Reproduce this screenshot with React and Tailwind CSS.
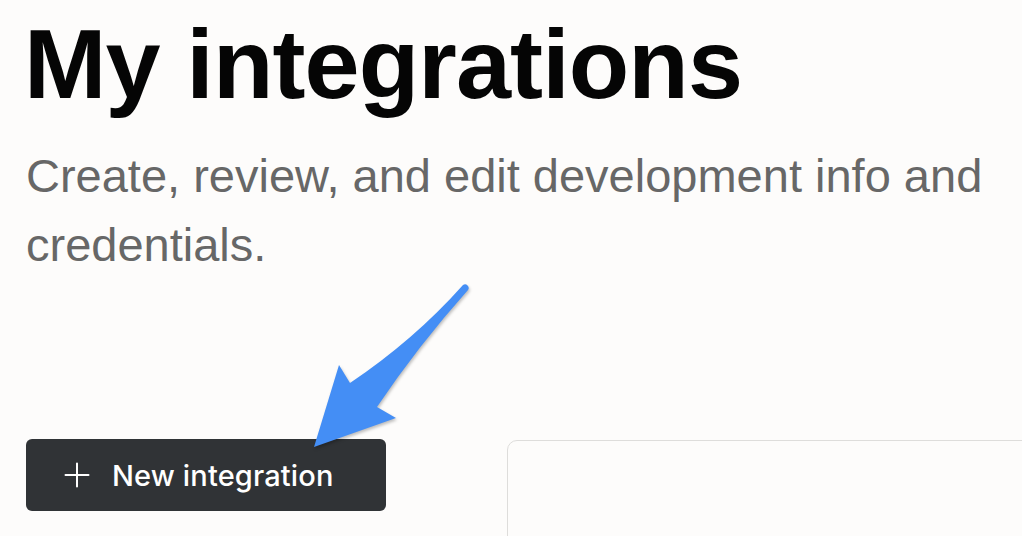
export default function App() {
  return (
    <div className="relative w-[1022px] h-[536px] overflow-hidden bg-[#fdfcfb]">
      <div className="flex flex-col pl-[26px] pt-[14px]">
        <h1 className="text-[99px] leading-none font-bold tracking-[-0.9px] text-[#050505] [font-family:'Liberation_Sans',Arial,sans-serif] ml-[-2px]">
          My integrations
        </h1>
        <p className="mt-[28px] text-[47px] leading-[69px] text-[#676767] [font-family:'Liberation_Sans',Arial,sans-serif] max-w-[970px]">
          Create, review, and edit development info and credentials.
        </p>
        <div className="mt-[160px] flex items-start">
          <button className="flex items-center h-[72px] w-[360px] shrink-0 rounded-[6px] bg-[#303336] pl-[38px] gap-[22px] text-white">
            <svg width="26" height="26" viewBox="0 0 26 26" fill="none" stroke="white" strokeWidth="2" strokeLinecap="round">
              <path d="M13 1.5V24.5M1.5 13H24.5" />
            </svg>
            <span className="text-[29px] font-medium [font-family:Inter,sans-serif] tracking-[0.15px] pt-[2px]">New integration</span>
          </button>
          <div className="ml-[121px] mt-[1px] h-[200px] w-[700px] shrink-0 rounded-[10px] border border-[#dedddb]" />
        </div>
      </div>
      <svg
        className="absolute left-[300px] top-[270px] [filter:drop-shadow(1px_2px_1.5px_rgba(0,0,0,0.25))]"
        width="200"
        height="200"
        viewBox="0 0 200 200"
      >
        <path
          d="M14 177 L39 95 L50 113 Q114 70 163 15 A3.6 3.6 0 0 1 168 20 Q118 76 77 137 L96 148 Z"
          fill="#448ef5"
        />
      </svg>
    </div>
  );
}
